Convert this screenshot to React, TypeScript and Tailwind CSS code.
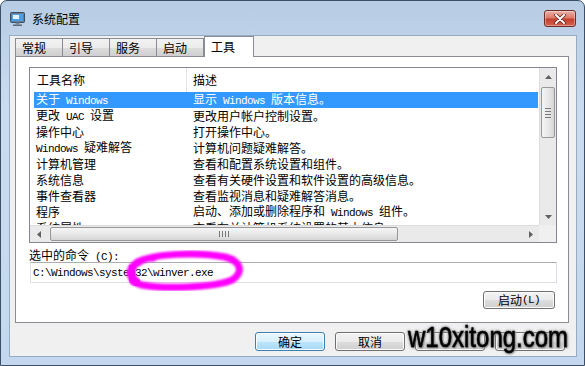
import type { ReactNode } from 'react';

const rows: [string, string][] = [
  ['关于 Windows', '显示 Windows 版本信息。'],
  ['更改 UAC 设置', '更改用户帐户控制设置。'],
  ['操作中心', '打开操作中心。'],
  ['Windows 疑难解答', '计算机问题疑难解答。'],
  ['计算机管理', '查看和配置系统设置和组件。'],
  ['系统信息', '查看有关硬件设置和软件设置的高级信息。'],
  ['事件查看器', '查看监视消息和疑难解答消息。'],
  ['程序', '启动、添加或删除程序和 Windows 组件。'],
  ['系统属性', '查看有关计算机系统设置的基本信息。'],
];

const tabs = ['常规', '引导', '服务', '启动'];

// latin runs get the narrow mono look of SimSun
function Txt({ s }: { s: string }) {
  return (
    <>
      {s.split(/([ A-Za-z0-9\\:.()]+)/).map((p, i) =>
        /[ A-Za-z0-9]/.test(p) ? (
          <span key={i} className="font-['Liberation_Mono',monospace] text-[11px] tracking-[-0.6px] whitespace-pre">
            {p}
          </span>
        ) : (
          <span key={i}>{p}</span>
        )
      )}
    </>
  );
}

function Arrow({ dir }: { dir: 'up' | 'down' | 'left' | 'right' }) {
  const pts = {
    up: '0,4 3.5,0 7,4',
    down: '0,0 3.5,4 7,0',
    left: '4,0 0,3.5 4,7',
    right: '0,0 4,3.5 0,7',
  }[dir];
  const vert = dir === 'up' || dir === 'down';
  return (
    <svg width={vert ? 7 : 4} height={vert ? 4 : 7}>
      <polygon points={pts} fill="#606060" />
    </svg>
  );
}

function Btn({ children, def, className = '' }: { children?: ReactNode; def?: boolean; className?: string }) {
  return (
    <div
      className={`flex items-center justify-center rounded-[3px] border shadow-[inset_0_0_0_1px_#fcfcfc] ${
        def
          ? 'border-[#3c7fb1] bg-[linear-gradient(180deg,#eaf6fd_0%,#d9f0fc_50%,#bee6fd_51%,#a7d9f5_100%)]'
          : 'border-[#707070] bg-[linear-gradient(180deg,#f2f2f2_0%,#ebebeb_50%,#dddddd_51%,#cfcfcf_100%)]'
      } ${className}`}
    >
      {children}
    </div>
  );
}

function AppIcon() {
  return (
    <svg width="16" height="16" viewBox="0 0 16 16">
      <rect x="0.5" y="1.5" width="14" height="10" rx="1" fill="#6b7c90" stroke="#3e4b5a" />
      <rect x="2" y="3" width="11" height="7" fill="#4d9fe6" />
      <rect x="3" y="4" width="6" height="4" fill="#e8f2fb" />
      <rect x="5.5" y="11.5" width="4" height="2" fill="#7d8896" />
      <rect x="3" y="13.5" width="9" height="1.5" fill="#5d6a79" />
    </svg>
  );
}

function CloseButton() {
  return (
    <div className="ml-auto mt-[9px] flex h-[17px] w-[32px] items-center justify-center rounded-[3px] border border-[#6e2d25] bg-[linear-gradient(180deg,#eab3a8_0%,#dc7a69_45%,#c2402f_55%,#d4614f_100%)] shadow-[inset_0_0_0_1px_rgba(255,255,255,0.35)]">
      <svg width="12" height="10" viewBox="0 0 12 10">
        <path d="M2 1 L10 9 M10 1 L2 9" stroke="#5b1a12" strokeWidth="3.4" strokeLinecap="round" />
        <path d="M2 1 L10 9 M10 1 L2 9" stroke="#ffffff" strokeWidth="2" strokeLinecap="round" />
      </svg>
    </div>
  );
}

function VScroll() {
  return (
    <div className="flex h-[157px] w-[17px] flex-col border-l border-[#dcdcdc] bg-[#eaeaea]">
      <div className="flex h-[17px] items-center justify-center">
        <Arrow dir="up" />
      </div>
      <div className="mx-[1px] mt-[2px] flex h-[51px] flex-col items-center justify-center gap-[2px] rounded-[2px] border border-[#979797] bg-[linear-gradient(90deg,#f5f5f5_0%,#e8e8e8_50%,#d6d6d6_100%)]">
        {[0, 1, 2, 3].map((i) => (
          <div key={i} className="h-px w-[6px] bg-[#7a7a7a]" />
        ))}
      </div>
      <div className="flex-1" />
      <div className="flex h-[17px] items-center justify-center">
        <Arrow dir="down" />
      </div>
    </div>
  );
}

function HScroll() {
  return (
    <div className="flex h-[17px] w-[509px] border-t border-[#dcdcdc] bg-[#eaeaea]">
      <div className="flex w-[17px] items-center justify-center">
        <Arrow dir="left" />
      </div>
      <div className="my-[1px] ml-[3px] flex w-[348px] items-center justify-center gap-[2px] rounded-[2px] border border-[#979797] bg-[linear-gradient(180deg,#f5f5f5_0%,#e8e8e8_50%,#d6d6d6_100%)]">
        {[0, 1, 2, 3].map((i) => (
          <div key={i} className="h-[6px] w-px bg-[#7a7a7a]" />
        ))}
      </div>
      <div className="flex-1" />
      <div className="flex w-[17px] items-center justify-center">
        <Arrow dir="right" />
      </div>
    </div>
  );
}

export default function App() {
  return (
    <div className="relative h-[366px] w-[585px] overflow-hidden rounded-t-[7px] border border-[#3d4f66] bg-[linear-gradient(180deg,#b7cde4_0%,#cadcef_30%,#c3d8ee_100%)] font-['Noto_Sans_CJK_SC',sans-serif] text-[12px] leading-[16px] text-black">
      {/* 标题栏 */}
      <div className="flex h-[34px] items-start px-[8px]">
        <div className="mt-[10px] flex items-center gap-[6px] pl-[1px]">
          <AppIcon />
          <span className="leading-[14px]">系统配置</span>
        </div>
        <CloseButton />
      </div>

      {/* 客户区 */}
      <div className="ml-[8px] mr-[7px] flex h-[322px] flex-col border border-[#97abc2] bg-[#f0f0f0] pl-[5px] pr-[7px]">
        {/* tabs */}
        <div className="flex h-[20px] items-end">
          {tabs.map((t, i) => (
            <div
              key={t}
              className={`flex h-[18px] w-[48px] items-center border border-b-0 border-[#898c95] bg-[linear-gradient(180deg,#f2f2f2_0%,#ebebeb_50%,#dddddd_51%,#cfcfcf_100%)] pl-[6px] ${
                i > 0 ? '-ml-px' : ''
              } ${i === 3 ? 'w-[46px]' : ''}`}
            >
              {t}
            </div>
          ))}
          <div className="relative z-10 -mb-px flex h-[21px] w-[50px] items-center border border-b-0 border-[#898c95] bg-white pl-[6px] pb-[1px]">
            工具
          </div>
        </div>

        {/* 面板 */}
        <div className="flex h-[267px] w-[554px] flex-col border border-[#898c95] bg-white pl-[13px] pr-[11px] pt-[10px]">
          {/* 列表 */}
          <div className="h-[176px] w-[528px] border border-[#828790] bg-white">
            <div className="grid grid-cols-[509px_17px] grid-rows-[157px_17px]">
              <div className="overflow-hidden">
                <div className="flex h-[24px] items-center">
                  <div className="flex h-full w-[157px] items-center border-r border-[#e5e5e5] pl-[7px]">工具名称</div>
                  <div className="pl-[6px]">描述</div>
                </div>
                <div className="pl-[4px]">
                  {rows.map(([name, desc], i) => (
                    <div
                      key={name}
                      className={`flex h-[16px] w-[504px] items-center whitespace-nowrap ${
                        i === 0 ? 'bg-[#3399ff] text-white' : ''
                      }`}
                    >
                      <div className="w-[159px] pl-[2px]">
                        <Txt s={name} />
                      </div>
                      <div>
                        <Txt s={desc} />
                      </div>
                    </div>
                  ))}
                </div>
              </div>
              <VScroll />
              <HScroll />
              <div className="bg-[#f0f0f0]" />
            </div>
          </div>

          <div className="mt-[4px] h-[15px] leading-[15px]">
            <Txt s="选中的命令 (C):" />
          </div>
          <div className="ml-[1px] flex h-[21px] w-[527px] items-center border border-[#dbdfe6] border-t-[#abadb3] pl-[2px]">
            <Txt s="C:\Windows\system32\winver.exe" />
          </div>
          <div className="mt-[8px] flex justify-end pr-[2px]">
            <Btn className="h-[18px] w-[72px]">
              <Txt s="启动(L)" />
            </Btn>
          </div>
        </div>

        {/* 底部按钮（后两个被水印盖住） */}
        <div className="mt-[9px] flex justify-end gap-[10px] pr-[4px]">
          <Btn def className="h-[19px] w-[70px]">确定</Btn>
          <Btn className="h-[19px] w-[70px]">取消</Btn>
          <Btn className="h-[19px] w-[70px]" />
          <Btn className="h-[19px] w-[70px]" />
        </div>
      </div>

      {/* 手绘标记 */}
      <svg className="pointer-events-none absolute inset-0" width="585" height="366">
        <defs>
          <filter id="soft" x="-10%" y="-10%" width="120%" height="120%">
            <feGaussianBlur stdDeviation="0.9" />
          </filter>
        </defs>
        <path
          d="M137 262 C150 252 198 251 224 256 C240 260 243 271 231 279 C212 287 162 288 141 284 C128 281 126 269 134 263 C138 259 146 257 152 257"
          fill="none"
          stroke="#ff00ff"
          strokeWidth="7"
          strokeLinecap="round"
          filter="url(#soft)"
        />
        <path d="M131 266 C128 272 130 279 138 283" fill="none" stroke="#ff00ff" strokeWidth="9" strokeLinecap="round" filter="url(#soft)" />
      </svg>

      {/* 水印 */}
      <div className="absolute left-[407px] top-[321px] origin-left scale-x-[0.8] whitespace-nowrap font-['Liberation_Sans',sans-serif] text-[30px] leading-[30px] text-black [-webkit-text-stroke:0.6px_#000] [text-shadow:0_0_2px_#8a8a8a,0_0_3px_#8a8a8a,0_0_4px_#9a9a9a,1px_1px_2px_#666]">
        w10xitong.com
      </div>
    </div>
  );
}
